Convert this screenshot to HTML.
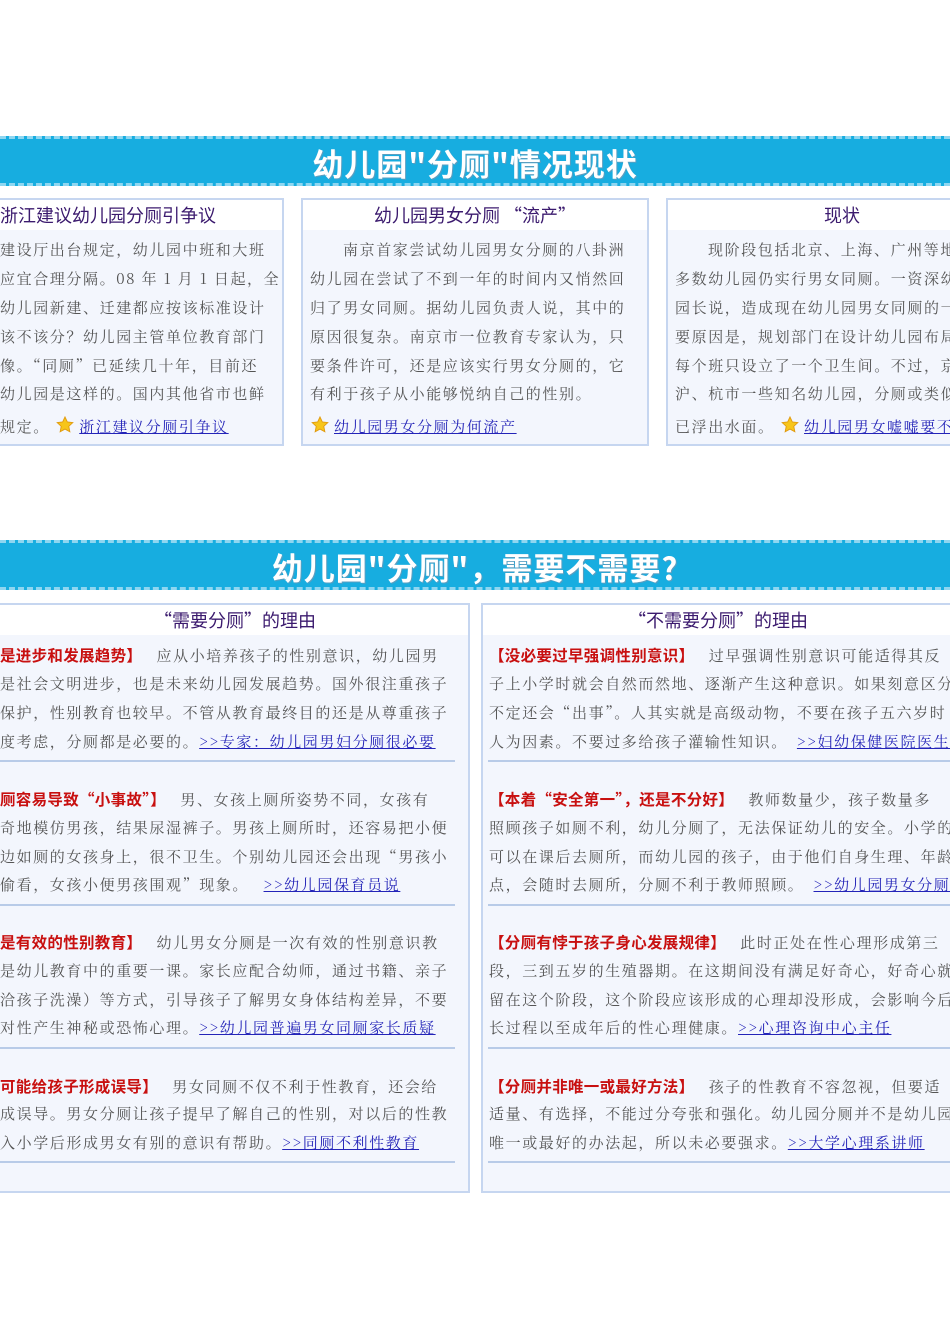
<!DOCTYPE html>
<html><head><meta charset="utf-8"><style>
*{margin:0;padding:0;box-sizing:border-box}
body{width:950px;height:1344px;position:relative;overflow:hidden;background:#fff;font-family:"Noto Serif CJK SC","Liberation Serif",serif}
.ban{position:absolute;left:0;width:950px;height:50px;background:#17ade0;border-top:3px dashed #8fd6f0;border-bottom:3px dashed #8fd6f0}
.ban span{position:absolute;top:4px;left:0;width:950px;text-align:center;color:#fff;font:bold 31px/40px "Noto Sans CJK SC","Liberation Sans",sans-serif;letter-spacing:1px;text-shadow:1px 1px 0 #5a9ec0}
.box{position:absolute;border:2px solid #c6d6f0;background:#f3f6fd}
.tt{position:absolute;left:0;right:0;top:0;height:30px;background:#fff;text-align:center;color:#3b1a6e;font:18px/30px "Noto Sans CJK SC","Liberation Sans",sans-serif}
.l{position:absolute;white-space:nowrap;font-size:15px;line-height:20px;letter-spacing:1.6px;color:#555}
.r{color:#c81010;font-weight:bold;font-size:15.5px;font-family:"Noto Sans CJK SC","Liberation Sans",sans-serif;letter-spacing:0.3px}
a{color:#2424b8;text-decoration:underline}
.sep{position:absolute;height:2px;background:#b8cbe8}
.st{display:inline-block;width:20px;height:18px;vertical-align:-2px;margin-right:4px}
</style></head><body>
<svg width="0" height="0" style="position:absolute"><defs><symbol id="s" viewBox="0 0 20 20"><path d="M10 1l2.6 5.6 6.1.7-4.5 4.2 1.2 6-5.4-3-5.4 3 1.2-6L1.3 7.3l6.1-.7z" fill="#f7c51a" stroke="#e09a10" stroke-width="1"/></symbol></defs></svg>

<div class="ban" style="top:136px"><span>幼儿园"分厕"情况现状</span></div>

<div class="box" style="left:-10px;top:198px;width:294px;height:248px"><div class="tt" style="text-align:left;padding-left:8px">浙江建议幼儿园分厕引争议</div></div>
<div class="l" style="left:0;top:240px">建设厅出台规定，幼儿园中班和大班</div>
<div class="l" style="left:0;top:269px">应宜合理分隔。08 年 1 月 1 日起，全</div>
<div class="l" style="left:0;top:298px">幼儿园新建、迁建都应按该标准设计</div>
<div class="l" style="left:0;top:327px">该不该分？幼儿园主管单位教育部门</div>
<div class="l" style="left:0;top:356px">像。“同厕”已延续几十年，目前还</div>
<div class="l" style="left:0;top:384px">幼儿园是这样的。国内其他省市也鲜</div>
<div class="l" style="left:0;top:416px">规定。 <svg class="st"><use href="#s"/></svg><a>浙江建议分厕引争议</a></div>

<div class="box" style="left:301px;top:198px;width:348px;height:248px"><div class="tt">幼儿园男女分厕 “流产”</div></div>
<div class="l" style="left:343px;top:240px">南京首家尝试幼儿园男女分厕的八卦洲</div>
<div class="l" style="left:310px;top:269px">幼儿园在尝试了不到一年的时间内又悄然回</div>
<div class="l" style="left:310px;top:298px">归了男女同厕。据幼儿园负责人说，其中的</div>
<div class="l" style="left:310px;top:327px">原因很复杂。南京市一位教育专家认为，只</div>
<div class="l" style="left:310px;top:356px">要条件许可，还是应该实行男女分厕的，它</div>
<div class="l" style="left:310px;top:384px">有利于孩子从小能够悦纳自己的性别。</div>
<div class="l" style="left:310px;top:416px"><svg class="st"><use href="#s"/></svg><a>幼儿园男女分厕为何流产</a></div>

<div class="box" style="left:666px;top:198px;width:300px;height:248px"><div class="tt" style="width:348px">现状</div></div>
<div class="l" style="left:708px;top:240px">现阶段包括北京、上海、广州等地</div>
<div class="l" style="left:675px;top:269px">多数幼儿园仍实行男女同厕。一资深幼</div>
<div class="l" style="left:675px;top:298px">园长说，造成现在幼儿园男女同厕的一</div>
<div class="l" style="left:675px;top:327px">要原因是，规划部门在设计幼儿园布局</div>
<div class="l" style="left:675px;top:356px">每个班只设立了一个卫生间。不过，京</div>
<div class="l" style="left:675px;top:384px">沪、杭市一些知名幼儿园，分厕或类似</div>
<div class="l" style="left:675px;top:416px">已浮出水面。 <svg class="st"><use href="#s"/></svg><a>幼儿园男女嘘嘘要不要</a></div>

<div class="ban" style="top:540px"><span>幼儿园"分厕"，需要不需要?</span></div>

<div class="box" style="left:-10px;top:603px;width:480px;height:590px"><div class="tt" style="padding-left:10px">“需要分厕”的理由</div></div>
<div class="box" style="left:481px;top:603px;width:480px;height:590px"><div class="tt" style="width:470px">“不需要分厕”的理由</div></div>

<div class="l" style="left:0;top:645px"><span class="r">是进步和发展趋势】</span>　 应从小培养孩子的性别意识，幼儿园男</div>
<div class="l" style="left:0;top:674px">是社会文明进步，也是未来幼儿园发展趋势。国外很注重孩子</div>
<div class="l" style="left:0;top:703px">保护，性别教育也较早。不管从教育最终目的还是从尊重孩子</div>
<div class="l" style="left:0;top:732px">度考虑，分厕都是必要的。<a>&gt;&gt;专家：幼儿园男妇分厕很必要</a></div>
<div class="sep" style="left:0;top:760px;width:455px"></div>
<div class="l" style="left:0;top:789px"><span class="r">厕容易导致“小事故”】</span>　 男、女孩上厕所姿势不同，女孩有</div>
<div class="l" style="left:0;top:818px">奇地模仿男孩，结果尿湿裤子。男孩上厕所时，还容易把小便</div>
<div class="l" style="left:0;top:847px">边如厕的女孩身上，很不卫生。个别幼儿园还会出现“男孩小</div>
<div class="l" style="left:0;top:875px">偷看，女孩小便男孩围观”现象。　 <a>&gt;&gt;幼儿园保育员说</a></div>
<div class="sep" style="left:0;top:904px;width:455px"></div>
<div class="l" style="left:0;top:932px"><span class="r">是有效的性别教育】</span>　 幼儿男女分厕是一次有效的性别意识教</div>
<div class="l" style="left:0;top:961px">是幼儿教育中的重要一课。家长应配合幼师，通过书籍、亲子</div>
<div class="l" style="left:0;top:990px">洽孩子洗澡）等方式，引导孩子了解男女身体结构差异，不要</div>
<div class="l" style="left:0;top:1018px">对性产生神秘或恐怖心理。<a>&gt;&gt;幼儿园普遍男女同厕家长质疑</a></div>
<div class="sep" style="left:0;top:1047px;width:455px"></div>
<div class="l" style="left:0;top:1076px"><span class="r">可能给孩子形成误导】</span>　 男女同厕不仅不利于性教育，还会给</div>
<div class="l" style="left:0;top:1104px">成误导。男女分厕让孩子提早了解自己的性别，对以后的性教</div>
<div class="l" style="left:0;top:1133px">入小学后形成男女有别的意识有帮助。<a>&gt;&gt;同厕不利性教育</a></div>
<div class="sep" style="left:0;top:1161px;width:455px"></div>

<div class="l" style="left:489px;top:645px"><span class="r">【没必要过早强调性别意识】</span>　 过早强调性别意识可能适得其反</div>
<div class="l" style="left:489px;top:674px">子上小学时就会自然而然地、逐渐产生这种意识。如果刻意区分</div>
<div class="l" style="left:489px;top:703px">不定还会“出事”。人其实就是高级动物，不要在孩子五六岁时</div>
<div class="l" style="left:489px;top:732px">人为因素。不要过多给孩子灌输性知识。　<a>&gt;&gt;妇幼保健医院医生</a></div>
<div class="sep" style="left:488px;top:760px;width:470px"></div>
<div class="l" style="left:489px;top:789px"><span class="r">【本着“安全第一”，还是不分好】</span>　 教师数量少，孩子数量多</div>
<div class="l" style="left:489px;top:818px">照顾孩子如厕不利，幼儿分厕了，无法保证幼儿的安全。小学的</div>
<div class="l" style="left:489px;top:847px">可以在课后去厕所，而幼儿园的孩子，由于他们自身生理、年龄</div>
<div class="l" style="left:489px;top:875px">点，会随时去厕所，分厕不利于教师照顾。　<a>&gt;&gt;幼儿园男女分厕</a></div>
<div class="sep" style="left:488px;top:904px;width:470px"></div>
<div class="l" style="left:489px;top:932px"><span class="r">【分厕有悖于孩子身心发展规律】</span>　 此时正处在性心理形成第三</div>
<div class="l" style="left:489px;top:961px">段，三到五岁的生殖器期。在这期间没有满足好奇心，好奇心就</div>
<div class="l" style="left:489px;top:990px">留在这个阶段，这个阶段应该形成的心理却没形成，会影响今后</div>
<div class="l" style="left:489px;top:1018px">长过程以至成年后的性心理健康。<a>&gt;&gt;心理咨询中心主任</a></div>
<div class="sep" style="left:488px;top:1047px;width:470px"></div>
<div class="l" style="left:489px;top:1076px"><span class="r">【分厕并非唯一或最好方法】</span>　 孩子的性教育不容忽视，但要适</div>
<div class="l" style="left:489px;top:1104px">适量、有选择，不能过分夸张和强化。幼儿园分厕并不是幼儿园</div>
<div class="l" style="left:489px;top:1133px">唯一或最好的办法起，所以未必要强求。<a>&gt;&gt;大学心理系讲师</a></div>
<div class="sep" style="left:488px;top:1161px;width:470px"></div>
</body></html>
